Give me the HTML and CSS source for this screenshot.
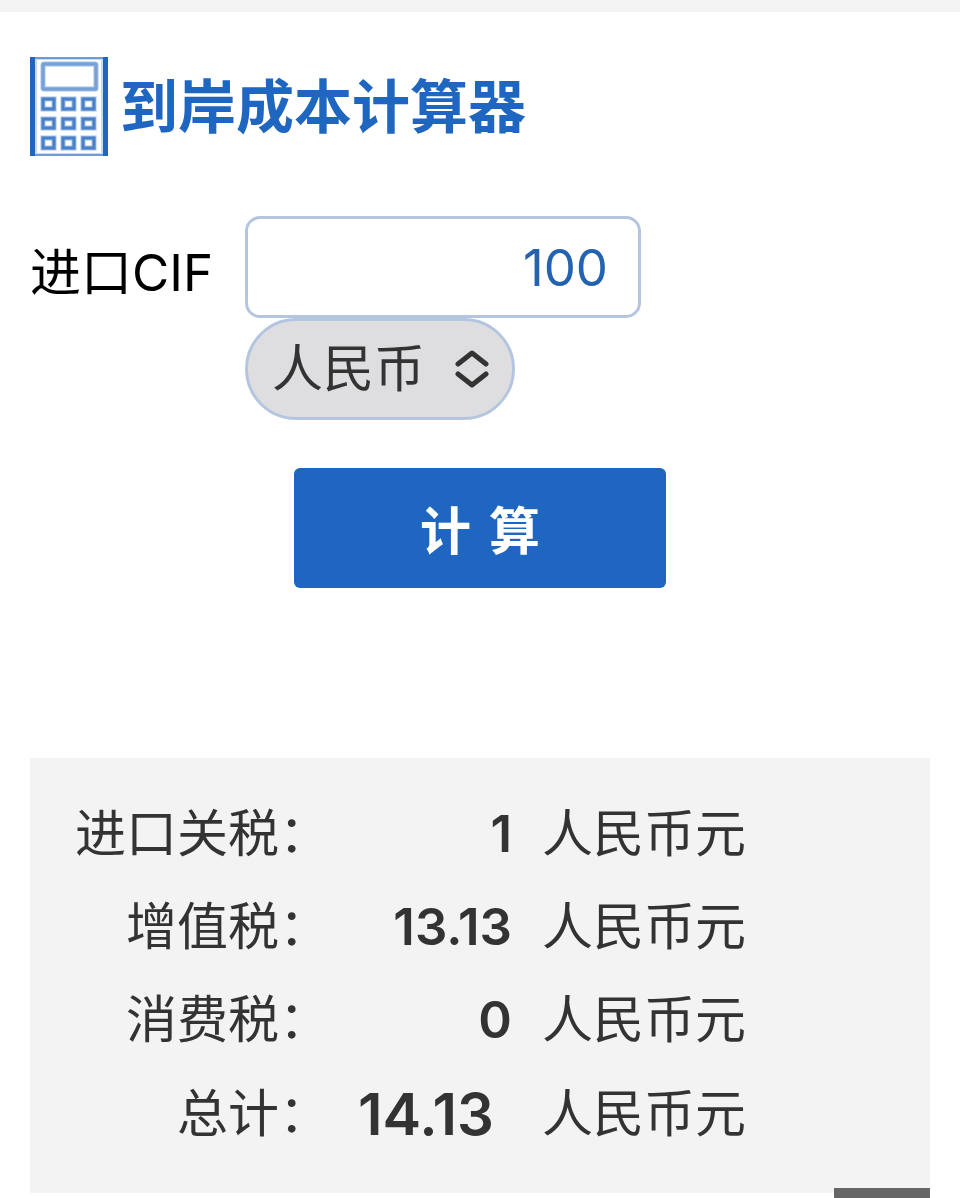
FILE: index.html
```
<!DOCTYPE html>
<html lang="zh-CN">
<head>
  <meta charset="UTF-8" />
  <meta name="viewport" content="width=device-width, initial-scale=1" />
  <title>到岸成本计算器</title>
  <link rel="stylesheet" href="styles.css">
</head>
<body>
  <main class="page">
    <header class="title">
      <svg class="calc-icon" viewBox="0 0 78 99" aria-hidden="true">
        <rect width="78" height="99" fill="#6f9bd5" />
        <rect x="5" y="2" width="68" height="95" fill="#c9daf0" />
        <rect x="7" y="3" width="64" height="93" fill="#fff" />
        <path fill="#2166bd" d="M0 0h5v99H0zM73 0h5v99h-5z" />
        <g class="icon-soft">
          <rect x="13" y="7" width="53" height="25" rx="1" />
          <path d="M13 42h11v10H13zM33 42h11v10H33zM53 42h11v10H53zM13 62h11v9H13zM33 62h11v9H33zM53 62h11v9H53zM13 81h11v10H13zM33 81h11v10H33zM53 81h11v10H53z" />
        </g>
        <g class="icon-core">
          <rect x="13" y="7" width="53" height="25" rx="1" opacity=".5" />
          <path d="M13 42h11v10H13zM33 42h11v10H33zM53 42h11v10H53zM13 62h11v9H13zM33 62h11v9H33zM53 62h11v9H53zM13 81h11v10H13zM33 81h11v10H33zM53 81h11v10H53z" />
        </g>
      </svg>
      <h1>到岸成本计算器</h1>
    </header>

    <form id="calcForm">
      <div class="field">
        <label for="cif">进口CIF</label>
        <div class="controls">
          <input id="cif" type="text" inputmode="decimal" value="100" />
          <div class="select-wrap">
            <select id="currency" aria-label="币种">
              <option>人民币</option>
              <option>美元</option>
              <option>欧元</option>
            </select>
            <svg class="arrows" viewBox="0 0 34 38" aria-hidden="true">
              <path d="M3 14L17 3l14 11M3 24l14 11 14-11" />
            </svg>
          </div>
        </div>
      </div>
      <button class="btn" type="submit"><span>计</span><span>算</span></button>
    </form>

    <section class="result">
      <table>
        <tr>
          <th scope="row">进口关税：</th>
          <td class="num" id="duty">1</td>
          <td class="unit">人民币元</td>
        </tr>
        <tr>
          <th scope="row">增值税：</th>
          <td class="num" id="vat">13.13</td>
          <td class="unit">人民币元</td>
        </tr>
        <tr>
          <th scope="row">消费税：</th>
          <td class="num" id="excise">0</td>
          <td class="unit">人民币元</td>
        </tr>
        <tr class="total">
          <th scope="row">总计：</th>
          <td class="num" id="total">14.13</td>
          <td class="unit">人民币元</td>
        </tr>
      </table>
    </section>
  </main>
  <a class="to-top" href="#" aria-label="返回顶部"></a>

  <script>
    document.getElementById("calcForm").addEventListener("submit", function (e) {
      e.preventDefault();
      const cif = parseFloat(document.getElementById("cif").value) || 0;
      const duty = cif * 0.01;
      const vat = (cif + duty) * 0.13;
      document.getElementById("duty").textContent = +duty.toFixed(2);
      document.getElementById("vat").textContent = +vat.toFixed(2);
      document.getElementById("total").textContent = +(duty + vat).toFixed(2);
    });
  </script>
</body>
</html>
```
FILE: styles.css
```
* {
  box-sizing: border-box;
}
body {
  margin: 0;
  border-top: 12px solid #f4f4f4;
  background: #fff;
  color: #333;
  font-family: Inter, "Noto Sans CJK SC", sans-serif;
  font-size: 51px;
  line-height: 60px;
}
.page {
  padding: 45px 30px 5px;
}
.title {
  display: flex;
  align-items: center;
  gap: 12px;
}
.calc-icon {
  width: 78px;
  height: 99px;
}
.icon-soft {
  fill: none;
  stroke: #a3c0e6;
  stroke-width: 5;
}
.icon-core {
  fill: none;
  stroke: #4a80ca;
  stroke-width: 3;
}
h1 {
  margin: 0;
  color: #1e66c0;
  font-size: 58px;
  font-weight: 700;
}
.field {
  display: flex;
  align-items: flex-start;
  gap: 30px;
  margin-top: 60px;
}
.field label {
  width: 185px;
  padding-top: 27px;
  color: #000;
  white-space: nowrap;
}
.controls {
  flex: 1;
}
input, select {
  display: block;
  height: 102px;
  border: 3px solid #b4c6df;
  font: inherit;
}
input {
  width: 100%;
  max-width: 396px;
  padding: 0 30px;
  border-radius: 15px;
  background: #fff;
  color: #2463b0;
  text-align: right;
}
.select-wrap {
  position: relative;
  width: 270px;
}
select {
  width: 100%;
  padding: 0 24px;
  border-radius: 51px;
  background: #dedee0;
  color: #333;
  appearance: none;
}
.arrows {
  position: absolute;
  top: 32px;
  right: 26px;
  width: 34px;
  height: 38px;
  fill: none;
  stroke: #333;
  stroke-width: 5;
  stroke-linecap: round;
  stroke-linejoin: round;
  pointer-events: none;
}
.btn {
  display: flex;
  justify-content: center;
  align-items: center;
  gap: 18px;
  width: 372px;
  height: 120px;
  margin: 48px auto 0;
  padding: 8px 0 0;
  border: none;
  border-radius: 6px;
  background: #1e66c0;
  color: #fff;
  font: inherit;
  font-weight: 700;
  cursor: pointer;
}
.result {
  margin-top: 170px;
  padding: 29px 0 31px;
  background: #f3f3f3;
}
table {
  border-collapse: collapse;
}
tr {
  height: 93px;
}
th, td {
  padding: 0;
  font-weight: 400;
  white-space: nowrap;
}
th {
  width: 300px;
  text-align: right;
}
.num {
  width: 182px;
  font-weight: 600;
  text-align: right;
}
.unit {
  padding-left: 30px;
}
.total {
  height: 96px;
}
.total .num {
  padding-right: 18px;
  font-size: 58px;
}
.to-top {
  position: fixed;
  right: 30px;
  bottom: 0;
  width: 96px;
  height: 10px;
  background: #666;
}
```
